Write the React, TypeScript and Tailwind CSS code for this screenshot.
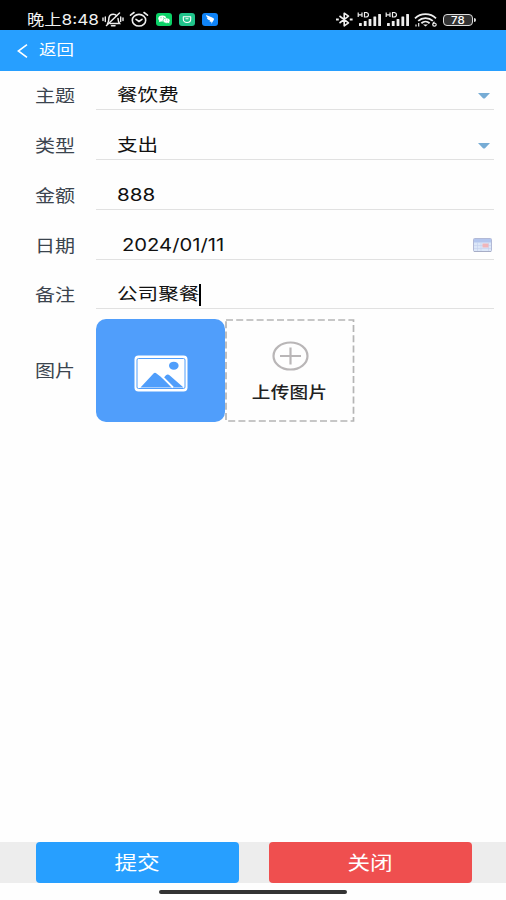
import { ReactNode } from "react";
import clsx from "clsx";

const SignalIcon = () => (
  <svg width="25" height="15" viewBox="0 0 25 15" fill="#eee">
    <path d="M1.200.5v4.500M5 .5v4.500M1.200 2.800H5M7.500.5v4.500h1.300q2.700 0 2.700-2.200T8.800.5H7" fill="none" stroke="#eee" strokeWidth="1.200" />
    <rect x="2" y="11" width="2.800" height="3" rx=".5" />
    <rect x="6.800" y="9" width="2.800" height="5" rx=".5" />
    <rect x="11.600" y="7" width="2.800" height="7" rx=".5" />
    <rect x="16.400" y="4.500" width="2.800" height="9.500" rx=".5" />
    <rect x="21.200" y="2" width="2.800" height="12" rx=".5" />
  </svg>
);

const StatusBar = () => (
  <div className="h-[30px] bg-black flex items-start pt-[10px] pl-[27px] text-white">
    <div className="w-[75px] h-[18px] leading-[18px]">
      <span className="inline-block origin-left scale-x-[1.19] text-[14.5px] whitespace-nowrap text-[#f2f2f2]">
        晚上8:48
      </span>
    </div>

    {/* Muted bell */}
    <svg className="mt-[2px]" width="22" height="15" viewBox="0 0 22 15" fill="none" stroke="#eee" strokeWidth="1.500" strokeLinecap="round">
      <path d="M5.500 11.500C7 10 6.500 8 7 5.500 7.500 3.200 9 2.200 11.200 2.200c1.600 0 2.800.6 3.500 1.500M16 6.500c.2 2.500.3 3.500 1.500 5H8" />
      <path d="M9.500 13.700h3.500M17.500 1 4.500 13.500" />
      <path d="M1 6v2.500M3.300 5v4.500M18.700 5v4.500M21 6v2.500" strokeWidth="1.400" />
    </svg>

    {/* Alarm */}
    <svg className="ml-[5px] mt-[1px]" width="20" height="17" viewBox="0 0 20 17" fill="none" stroke="#eee" strokeWidth="1.600" strokeLinecap="round">
      <ellipse cx="10" cy="9.200" rx="6.700" ry="5.800" />
      <path d="M1.500 4.200 5 1.500M18.500 4.200 15 1.500M7 8.300l3 2.200 3-2.200" />
    </svg>

    {/* WeChat */}
    <svg className="ml-[7px] mt-[3px]" width="16" height="13" viewBox="0 0 16 13">
      <rect width="16" height="13" rx="3" fill="#0bd267" />
      <ellipse cx="6.300" cy="5.500" rx="4" ry="3" fill="#fff" />
      <path d="m3.500 7-.6 2.300L6 8z" fill="#fff" />
      <ellipse cx="10.500" cy="7.600" rx="3.500" ry="2.600" fill="#fff" stroke="#0bd267" strokeWidth=".5" />
      <path d="m11.500 9.500 1.800 1-.3-1.800z" fill="#fff" />
      <g fill="#0bd267">
        <circle cx="5" cy="4.800" r=".5" />
        <circle cx="7.700" cy="4.800" r=".5" />
        <circle cx="9.400" cy="7" r=".4" />
        <circle cx="11.600" cy="7" r=".4" />
      </g>
    </svg>

    {/* Mi home */}
    <svg className="ml-[7px] mt-[3px]" width="16" height="13" viewBox="0 0 16 13">
      <rect width="16" height="13" rx="3" fill="#20c48b" />
      <path d="M4.300 3.800h7.400v2.400c0 2.100-1.500 3.300-3.700 3.300S4.300 8.300 4.300 6.200zM6.500 5.800h3" fill="none" stroke="#fff" strokeWidth="1.100" strokeLinejoin="round" />
    </svg>

    {/* DingTalk */}
    <svg className="ml-[7px] mt-[3px]" width="16" height="13" viewBox="0 0 16 13">
      <rect width="16" height="13" rx="3" fill="#0f83f7" />
      <path d="M4 2c2.500 1.200 5 1.800 7.500 3.200.8.5.5 1.300.1 2L9.300 11l.2-2.300-1.900.1.5-1.200C6 7 5 5.700 4.800 4.700l1.500.4C4.800 4.200 4.200 3.200 4 2z" fill="#fff" />
    </svg>

    <div className="ml-[117px] flex items-start">
      {/* Bluetooth */}
      <svg className="mt-[2px]" width="19" height="15" viewBox="0 0 19 15" fill="none" stroke="#eee" strokeWidth="1.600" strokeLinejoin="round">
        <path d="m4.500 4 9 6.800-4.300 3V1.200l4.300 3L4.500 11" />
        <path d="M1 7.500h2.800M14.800 7.500h2.800" strokeWidth="2" />
      </svg>
      <div className="ml-[3px] mt-[2px]"><SignalIcon /></div>
      <div className="ml-[3px] mt-[2px]"><SignalIcon /></div>

      {/* Wifi */}
      <svg className="ml-[4px] mt-[3px]" width="23" height="14" viewBox="0 0 23 14" fill="none" stroke="#eee" strokeWidth="1.800">
        <path d="M1 5.300C6.700-.2 16.300-.2 22 5.300M4.200 7.800c4-3.700 10.600-3.700 14.600 0M7.400 10.200c2.300-2 5.900-2 8.200 0" />
        <path d="M9 11.500h5L11.500 13.500z" fill="#eee" stroke="none" />
        <path d="M2 13.500v-2M4.700 13.500v-3.500" strokeWidth="1.200" />
        <path d="M20.500 8.700c-1.200.7-1.800 1.700-1.800 2.700 0 2.200 3.500 2.200 3.500.2 0-1.500-2-1.800-3-.9" strokeWidth="1.200" />
      </svg>

      {/* Battery */}
      <div className="ml-[6px] mt-[4px] flex items-center">
        <div className="w-[30px] h-[12px] rounded-[4px] border-[1.5px] border-[#ddd] bg-[#333] text-[10px] leading-[9px] font-medium flex items-center justify-center">
          <span className="inline-block scale-x-[1.15]">78</span>
        </div>
        <div className="ml-px w-[2px] h-[4px] rounded-r bg-[#ddd]" />
      </div>
    </div>
  </div>
);

const DropdownArrow = () => (
  <svg className="ml-auto mr-[4px] mt-px" width="12" height="6" viewBox="0 0 12 6">
    <path d="M0 0h12L7 5.200q-1 .8-2 0z" fill="#77acd5" />
  </svg>
);

const CalendarIcon = () => (
  <svg className="ml-auto mr-[2px] -mt-[2px]" width="19" height="14" viewBox="0 0 19 14">
    <rect x=".5" y=".5" width="18" height="13" rx="1" fill="#dce7f8" stroke="#b2b9d6" />
    <path d="M1 1h17v3.500H1z" fill="#b4c6ee" />
    <path d="M4.500 4.500v8.500M8 4.500v8.500M15.500 4.500v8.500M1 7.500h17M1 10.500h17" stroke="#c5d0ee" strokeWidth=".6" />
    <path d="M9.500 5.500h6v4h-6z" fill="#f0b5ba" />
    <path d="M1 13.500h17" stroke="#a7adc6" />
  </svg>
);

interface FieldProps {
  label: string;
  value: string;
  className?: string;
  valueClassName?: string;
  focused?: boolean;
  children?: ReactNode;
}

const Field = ({ label, value, className, valueClassName, focused, children }: FieldProps) => (
  <div className={clsx("flex items-end pl-[35px] pr-[12px]", className)}>
    <div className="w-[61px] h-[27px] leading-[27px] text-[17px] text-[#3b444e]">
      <span className="inline-block origin-left scale-x-[1.18] whitespace-nowrap">{label}</span>
    </div>
    <div className="flex-1 h-[30px] pt-[2px] pl-[21px] border-b border-[#e1e1e1] flex items-center text-[17px] text-[#111]">
      <span className={clsx("inline-block origin-left whitespace-nowrap", valueClassName || "scale-x-[1.21]")}>
        {value}
      </span>
      {focused && <span className="ml-[14px] w-[1.5px] h-[22px] bg-black" />}
      {children}
    </div>
  </div>
);

const App = () => {
  return (
    <div className="w-full h-[900px] flex flex-col overflow-hidden bg-[#fefefe] font-['Inter','Noto_Sans_CJK_SC',sans-serif]">
      <StatusBar />

      {/* Header */}
      <header className="h-[41px] bg-[#279fff] flex items-center pl-[17px] text-white">
        <svg width="11" height="14" viewBox="0 0 11 14" fill="none" stroke="#fff" strokeWidth="1.600">
          <path d="M10 .7 1.300 7l8.700 6.300" />
        </svg>
        <span className="ml-[11px] -mt-px inline-block origin-left scale-x-[1.2] text-[14.5px]">返回</span>
      </header>

      {/* Form */}
      <main className="flex-1">
        <Field label="主题" value="餐饮费" className="h-[39px]">
          <DropdownArrow />
        </Field>
        <Field label="类型" value="支出" className="h-[50px]">
          <DropdownArrow />
        </Field>
        <Field label="金额" value="888" className="h-[50px]" />
        <Field label="日期" value="2024/01/11" className="h-[50px]" valueClassName="ml-[5px] scale-x-[1.19]">
          <CalendarIcon />
        </Field>
        <Field label="备注" value="公司聚餐" className="h-[49px]" focused />

        <div className="mt-[10px] pl-[35px] flex items-center">
          <div className="w-[61px] pt-[2px] text-[17px] text-[#3b444e]">
            <span className="inline-block origin-left scale-x-[1.18] whitespace-nowrap">图片</span>
          </div>
          <div className="w-[129px] h-[103px] rounded-[10px] bg-[#509efb] flex items-center justify-center">
            <svg className="mt-[5px]" width="54" height="37" viewBox="0 0 54 37">
              <rect x=".5" y=".5" width="53" height="36" rx="4" fill="#fff" />
              <rect x="3" y="3.500" width="48" height="30" rx="1.500" fill="none" stroke="#509efb" />
              <ellipse cx="39.800" cy="10.700" rx="4.800" ry="4" fill="#509efb" />
              <path d="M6.500 32.500 19.500 18.500q1.500-1.300 3 0l6.500 5 3-3.200q1.800-1.500 3.800.2L49.500 32.500z" fill="#509efb" />
              <path d="m28 21.500 11 11" stroke="#fff" strokeWidth="1.800" />
            </svg>
          </div>
          <div className="w-[130px] h-[103px] flex relative">
            <svg className="absolute inset-0" width="130" height="103" viewBox="0 0 130 103" fill="none">
              <rect x="1" y="1" width="127.500" height="101" stroke="#b5b5b5" strokeWidth="1.700" strokeDasharray="7 3.200" />
            </svg>
            <div className="flex-1 flex flex-col items-center pt-[22px]">
              <svg width="37" height="30" viewBox="0 0 37 30" fill="none" stroke="#b9b6b7" strokeWidth="2.200">
                <ellipse cx="18.500" cy="15" rx="17" ry="13.500" />
                <path d="M8 15h21M18.500 6.500v17" />
              </svg>
              <span className="mt-[10px] inline-block scale-x-[1.2] text-[15.5px] tracking-[0.3px] leading-[24px] font-medium text-[#222]">
                上传图片
              </span>
            </div>
          </div>
        </div>
      </main>

      {/* Actions */}
      <footer className="h-[58px]">
        <div className="h-[41px] bg-[#ededed] pl-[35.5px] flex gap-[30px] text-white text-[19px]">
          <button className="w-[203px] h-[41px] pt-[4px] rounded-[4px] bg-[#279fff]">
            <span className="inline-block scale-x-[1.19]">提交</span>
          </button>
          <button className="w-[203px] h-[41px] pt-[4px] rounded-[4px] bg-[#ef4f4f]">
            <span className="inline-block scale-x-[1.19]">关闭</span>
          </button>
        </div>
        <div className="mt-[7px] mx-auto w-[188px] h-[4px] rounded-full bg-[#333]" />
      </footer>
    </div>
  );
};

export default App;
